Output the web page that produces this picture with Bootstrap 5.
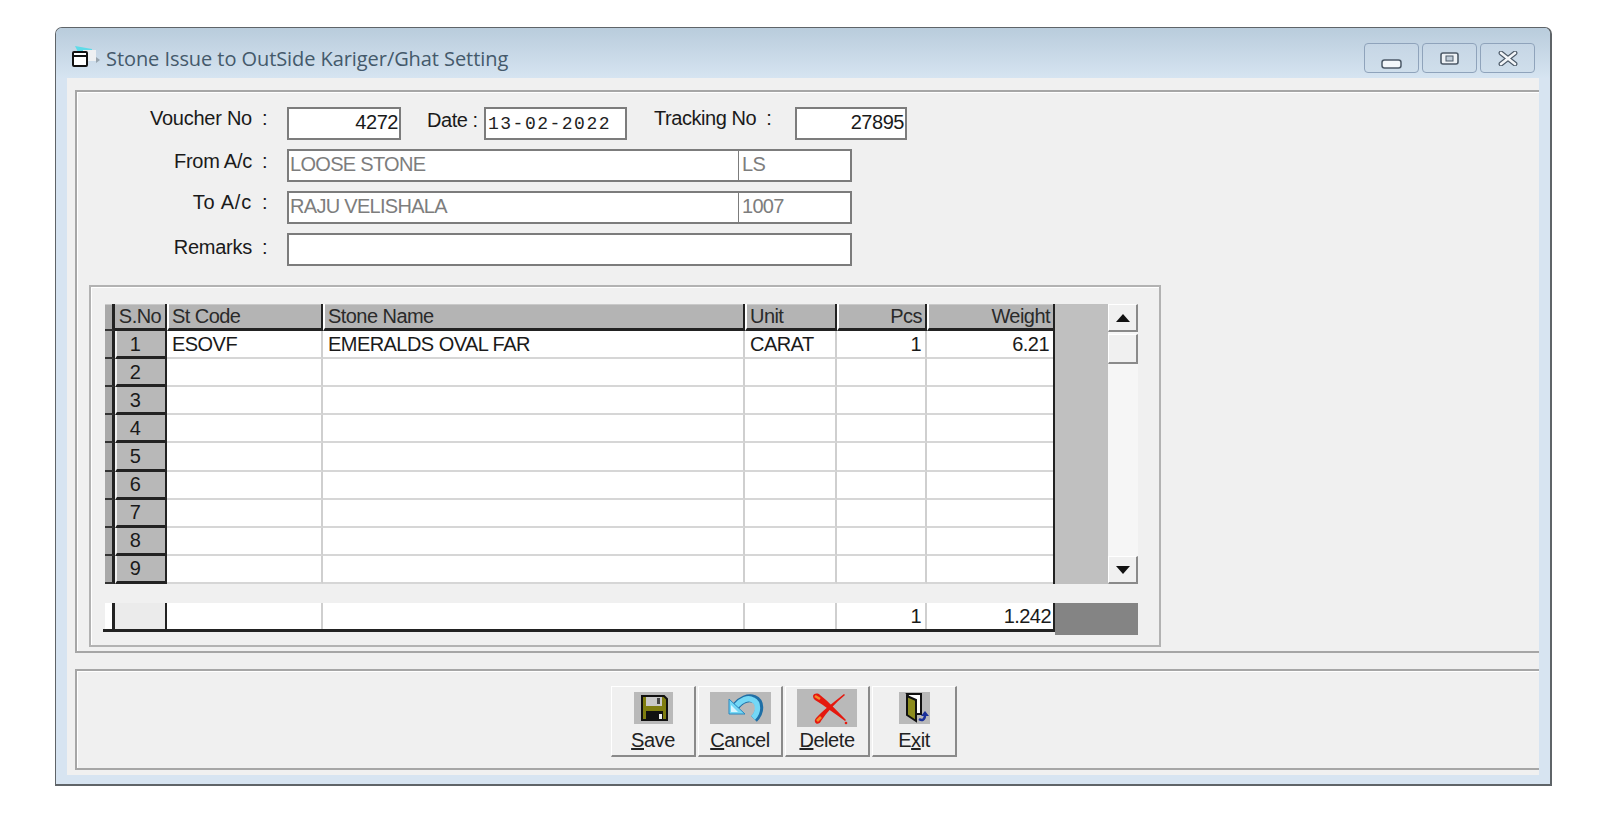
<!DOCTYPE html>
<html lang="en">
<head>
<meta charset="utf-8">
<title>Stone Issue to OutSide Kariger/Ghat Setting</title>
<link rel="stylesheet" href="https://cdn.jsdelivr.net/npm/bootstrap@5.3.0/dist/css/bootstrap.min.css">
<style>
body{background:#fff;font-family:"Liberation Sans",Arial,sans-serif;font-size:20px;letter-spacing:-.45px;color:#1a1a1a;margin:0}
.win{margin:27px 0 0 55px;width:1497px;height:759px;border:1px solid #5f6468;border-width:1.5px 2px 2px 1.5px;border-radius:7px 7px 0 0;background:#d7e4f1;overflow:hidden}
.titlebar{height:50px;padding:0 15px 0 16px;background:linear-gradient(#b9ccdc,#d6e4f1)}
.ticon{margin-top:8px}
.wtitle{font-family:"Open Sans",sans-serif;font-size:20px;letter-spacing:-.07px;color:#44596b;margin-left:6px;margin-top:11px}
.wbtn{width:55px;height:30px;border:1.5px solid #8fa3bb;border-radius:4px;background:linear-gradient(#c6d6e5,#cfdeeb);padding:0}
.wctrls{gap:3px;margin-top:10px}
.client{margin-left:11px;width:1472px;height:697px;background:#f0f0f0;padding-top:12px}
.pane{margin-left:8px;border:solid #a6a6a6;border-width:2px 0 2px 2px;box-shadow:inset 1px 1px 0 #fff}
.pane-top{height:563px;padding:15px 0 0 0}
.pane-bot{height:101px;margin-top:16px;padding:15px 0 0 534px;gap:2px}
.frow{display:flex;align-items:flex-start;height:33px;margin-bottom:9px}
.lbl{width:175px;text-align:right;line-height:24px;white-space:nowrap;letter-spacing:-.25px}
.lbl-wide{letter-spacing:.8px}
.col-mark{width:35px;padding-left:10px;line-height:24px}
.fld{height:33px;background:#fff;border:2px solid #7c7c7c;line-height:27px;padding:0 1px 0 2px;white-space:nowrap;overflow:hidden;flex:none}
.dis{color:#7d7d7d;padding-left:1px;letter-spacing:-.7px}
.w-v{width:114px;text-align:right}
.w-d{width:143px;font-family:"Liberation Mono",monospace;font-size:18px;letter-spacing:1.5px;line-height:30px;color:#222}
.w-t{width:112px;text-align:right}
.w-nm{width:452px;border-right:1px solid #7c7c7c}
.w-cd{width:113px;border-left:0;padding-left:3px}
.w-rm{width:565px}
.dlbl{margin-left:26px;width:57px;line-height:24px;margin-top:1px;white-space:nowrap}
.tlbl{margin-left:27px;width:141px;line-height:24px;margin-top:-1px;white-space:nowrap}
.up1{margin-top:-1px}.up5{margin-top:2px}
.gbox{margin:19px 0 0 12px;width:1072px;height:362px;border:2px solid #b2b2b2;padding:17px 0 0 14px;box-shadow:inset 1px 1px 0 #fff}
.gridwrap{height:280px}
table.dgrid{table-layout:fixed;border-collapse:separate;border-spacing:0;background:#fff;margin:0;font-size:20px;letter-spacing:-.55px}
table.main-t{width:948px}
table.foot-t{width:950px}
.dgrid td,.dgrid th{padding:0 3px 0 5px;line-height:24px;font-weight:400;overflow:hidden;white-space:nowrap;height:28px;border-right:2px solid #cfcfcf;border-bottom:2px solid #d6d6d6}
.dgrid thead th{height:27px;padding-left:3px;background:#b4b4b4;border-right:2px solid #222;border-bottom:3px solid #222;box-shadow:inset 0 1px 0 #c9c9c9;color:#2a2a2a}
.dgrid thead th.nosep,.dgrid td.nosep{border-right:0}
.dgrid .gapl{border-left:2px solid #fff}
.dgrid .ind,.dgrid thead th.ind{background:#a9a9a9;padding:0;border-right:3px solid #222;border-bottom:2px solid #333}
.dgrid .rh{background:#b8b8b8;text-align:center;padding:0 12px 0 0;border-left:2px solid #f0f0f0;border-right:2px solid #222;border-bottom:3px solid #222}
.dgrid .numc{padding-right:4px}
.grayfill{width:55px;background:#c0c0c0;border-left:2px solid #222}
.vscroll{width:30px;background:#f6f6f6}
.sbtn{height:28px;background:#f0f0f0;border:solid #8a8a8a;border-width:1px 2px 2px 1px;border-top-color:#fff;border-left-color:#fff;padding:0;width:30px;border-radius:0}
.thumb{height:30px;margin-top:2px}
.foot{margin:19px 0 0 -2px;width:1035px;height:32px}
.foottbl{padding-left:2px;border-bottom:3px solid #222;height:29px}
.foottbl table.dgrid td{height:26px;border-bottom:0}
.foottbl .dgrid .ind{background:#fff;border-bottom:0}
.foottbl .dgrid .rh2{background:#ebebeb;border-right:2px solid #222}
.foottbl .dgrid .lastc{border-right:2px solid #222;padding-right:2px}
.darkend{width:83px;background:#848484}
.toolb{width:85px;height:71px;padding:0;background:#f0f0f0;border:solid #8a8a8a;border-width:1px 2px 2px 1px;border-top-color:#fff;border-left-color:#fff;border-radius:0;color:#222;font-size:20px;letter-spacing:-.45px;line-height:24px;display:flex;flex-direction:column;align-items:center}
.toolb:hover{background:#f0f0f0}
.icb{background:#b9b9b9;display:block;margin-top:5px;height:32px;margin-bottom:1px}
.icb-del{margin-top:2px;height:38px}
.txtrow{margin-top:auto;margin-bottom:3px}
</style>
</head>
<body>
<div class="win">
  <div class="titlebar d-flex align-items-center">
    <svg class="ticon" width="28" height="22" viewBox="0 0 28 22" aria-hidden="true">
      <path d="M3 0L20 3V6H6z" fill="#5fdbe8"/>
      <rect x="11" y="4" width="13" height="11" fill="#eef0f2"/>
      <rect x="1" y="6" width="14" height="14" rx="1" fill="#fff" stroke="#111" stroke-width="2"/>
      <path d="M1 10h14" stroke="#111" stroke-width="2"/>
      <path d="M24 11l4 3-4 3z" fill="#98a4ae"/>
    </svg>
    <span class="wtitle">Stone Issue to OutSide Kariger/Ghat Setting</span>
    <div class="wctrls d-flex ms-auto">
      <button type="button" class="wbtn d-flex align-items-center justify-content-center" aria-label="Minimize"><svg width="21" height="10" viewBox="0 0 21 10" style="margin-top:12px"><rect x="1" y="1" width="19" height="8" rx="2.5" fill="#f4f7fa" stroke="#4d5a68" stroke-width="1.5"/></svg></button>
      <button type="button" class="wbtn d-flex align-items-center justify-content-center" aria-label="Maximize"><svg width="19" height="13" viewBox="0 0 19 13"><rect x="1" y="1" width="17" height="11" rx="2" fill="#eef2f6" stroke="#4d5a68" stroke-width="1.6"/><rect x="6" y="4" width="7" height="5" fill="#c0ccd8" stroke="#4d5a68"/></svg></button>
      <button type="button" class="wbtn d-flex align-items-center justify-content-center" aria-label="Close"><svg width="20" height="15" viewBox="0 0 20 15"><path d="M3 2l14 11M17 2L3 13" stroke="#4d5a68" stroke-width="4.8" stroke-linecap="round"/><path d="M3 2l14 11M17 2L3 13" stroke="#f2f5f8" stroke-width="2.6" stroke-linecap="round"/></svg></button>
    </div>
  </div>
  <div class="client">
    <div class="pane pane-top">
      <div class="frow">
        <span class="lbl up1">Voucher No</span><span class="col-mark up1">:</span>
        <div class="fld w-v">4272</div>
        <span class="dlbl">Date :</span>
        <div class="fld w-d">13-02-2022</div>
        <span class="tlbl">Tracking No&nbsp; :</span>
        <div class="fld w-t">27895</div>
      </div>
      <div class="frow">
        <span class="lbl">From A/c</span><span class="col-mark">:</span>
        <div class="fld dis w-nm">LOOSE STONE</div><div class="fld dis w-cd">LS</div>
      </div>
      <div class="frow">
        <span class="lbl up1 lbl-wide">To A/c</span><span class="col-mark up1">:</span>
        <div class="fld dis w-nm">RAJU VELISHALA</div><div class="fld dis w-cd">1007</div>
      </div>
      <div class="frow mb-0">
        <span class="lbl up5">Remarks</span><span class="col-mark up5">:</span>
        <div class="fld w-rm"></div>
      </div>
      <div class="gbox">
        <div class="gridwrap d-flex">
          <table class="dgrid main-t">
            <colgroup><col style="width:10px"><col style="width:52px"><col style="width:156px"><col style="width:422px"><col style="width:92px"><col style="width:90px"><col style="width:126px"></colgroup>
            <thead><tr><th class="ind"></th><th class="text-center p-0">S.No</th><th class="gapl">St Code</th><th class="gapl">Stone Name</th><th class="gapl">Unit</th><th class="gapl text-end">Pcs</th><th class="gapl text-end nosep">Weight</th></tr></thead>
            <tbody>
              <tr><td class="ind"></td><td class="rh">1</td><td>ESOVF</td><td>EMERALDS OVAL FAR</td><td>CARAT</td><td class="text-end numc">1</td><td class="text-end nosep numc">6.21</td></tr>
              <tr><td class="ind"></td><td class="rh">2</td><td></td><td></td><td></td><td></td><td class="nosep"></td></tr>
              <tr><td class="ind"></td><td class="rh">3</td><td></td><td></td><td></td><td></td><td class="nosep"></td></tr>
              <tr><td class="ind"></td><td class="rh">4</td><td></td><td></td><td></td><td></td><td class="nosep"></td></tr>
              <tr><td class="ind"></td><td class="rh">5</td><td></td><td></td><td></td><td></td><td class="nosep"></td></tr>
              <tr><td class="ind"></td><td class="rh">6</td><td></td><td></td><td></td><td></td><td class="nosep"></td></tr>
              <tr><td class="ind"></td><td class="rh">7</td><td></td><td></td><td></td><td></td><td class="nosep"></td></tr>
              <tr><td class="ind"></td><td class="rh">8</td><td></td><td></td><td></td><td></td><td class="nosep"></td></tr>
              <tr><td class="ind"></td><td class="rh">9</td><td></td><td></td><td></td><td></td><td class="nosep"></td></tr>
            </tbody>
          </table>
          <div class="grayfill"></div>
          <div class="vscroll d-flex flex-column">
            <button type="button" class="btn sbtn d-flex align-items-center justify-content-center" aria-label="Up"><svg width="14" height="8" viewBox="0 0 14 8"><path d="M7 0l7 8H0z" fill="#111"/></svg></button>
            <div class="sbtn thumb"></div>
            <button type="button" class="btn sbtn d-flex align-items-center justify-content-center mt-auto" aria-label="Down"><svg width="14" height="8" viewBox="0 0 14 8"><path d="M7 8L14 0H0z" fill="#111"/></svg></button>
          </div>
        </div>
        <div class="foot d-flex">
          <div class="foottbl">
            <table class="dgrid foot-t">
              <colgroup><col style="width:10px"><col style="width:52px"><col style="width:156px"><col style="width:422px"><col style="width:92px"><col style="width:90px"><col style="width:128px"></colgroup>
              <tbody><tr><td class="ind"></td><td class="rh2"></td><td></td><td></td><td></td><td class="text-end numc">1</td><td class="text-end lastc">1.242</td></tr></tbody>
            </table>
          </div>
          <div class="darkend"></div>
        </div>
      </div>
    </div>
    <div class="pane pane-bot d-flex">
      <button type="button" class="btn toolb">
        <svg class="icb" width="39" height="32" viewBox="0 0 39 32" aria-hidden="true"><path d="M8 4h22l3 3v21H8z" fill="#7f7d10" stroke="#111" stroke-width="2"/><rect x="12" y="5" width="16" height="9" fill="#c9c9c9"/><rect x="23" y="6" width="3" height="6" fill="#444"/><rect x="12" y="19" width="17" height="9" fill="#111"/><rect x="25" y="22" width="3" height="5" fill="#eee"/></svg>
        <span class="txtrow"><u>S</u>ave</span>
      </button>
      <button type="button" class="btn toolb">
        <svg class="icb" width="61" height="30" viewBox="0 0 61 30" aria-hidden="true"><path d="M26 13C31 7 38 4 44 6c7 3 7 13 0 20" fill="none" stroke="#1f6fa6" stroke-width="8"/><path d="M26 13C31 7 38 4 43 7c6 3 6 12 0 18" fill="none" stroke="#74d8f6" stroke-width="5.4"/><path d="M19 6v15h16z" fill="#74d8f6" stroke="#2b86bd"/><path d="M21 12v7h7z" fill="#d8f6ff"/></svg>
        <span class="txtrow"><u>C</u>ancel</span>
      </button>
      <button type="button" class="btn toolb">
        <svg class="icb icb-del" width="60" height="38" viewBox="0 0 60 38" aria-hidden="true"><path d="M16 7c1-3 5-3 7-1 9 7 17 16 26 25l-1 1C38 25 28 17 18 11c-1-1-2-2-2-4z" fill="#e5180e"/><path d="M18 7l5 3" stroke="#f58a2a" stroke-width="2.6"/><path d="M47 5l1 1C38 14 30 23 24 32c-1 3-5 4-6 1-1-2 1-4 3-6C28 20 38 12 47 5z" fill="#e5180e"/><path d="M20 32l4-4" stroke="#f58a2a" stroke-width="2.6"/><circle cx="49" cy="34" r="1.3" fill="#e5180e"/></svg>
        <span class="txtrow"><u>D</u>elete</span>
      </button>
      <button type="button" class="btn toolb">
        <svg class="icb" width="31" height="30" viewBox="0 0 31 30" aria-hidden="true"><path d="M8 1h14v20h-5z" fill="#fff" stroke="#111" stroke-width="2"/><path d="M8 3l9 4v21l-9-6z" fill="#8c8c1e" stroke="#111" stroke-width="2"/><path d="M20 26c3 2 6 1 6-4" fill="none" stroke="#1a2f9a" stroke-width="2.4"/><path d="M22 23l4-5 4 5z" fill="#1a2f9a"/></svg>
        <span class="txtrow">E<u>x</u>it</span>
      </button>
    </div>
  </div>
</div>
<script src="https://cdn.jsdelivr.net/npm/bootstrap@5.3.0/dist/js/bootstrap.bundle.min.js"></script>
</body>
</html>
